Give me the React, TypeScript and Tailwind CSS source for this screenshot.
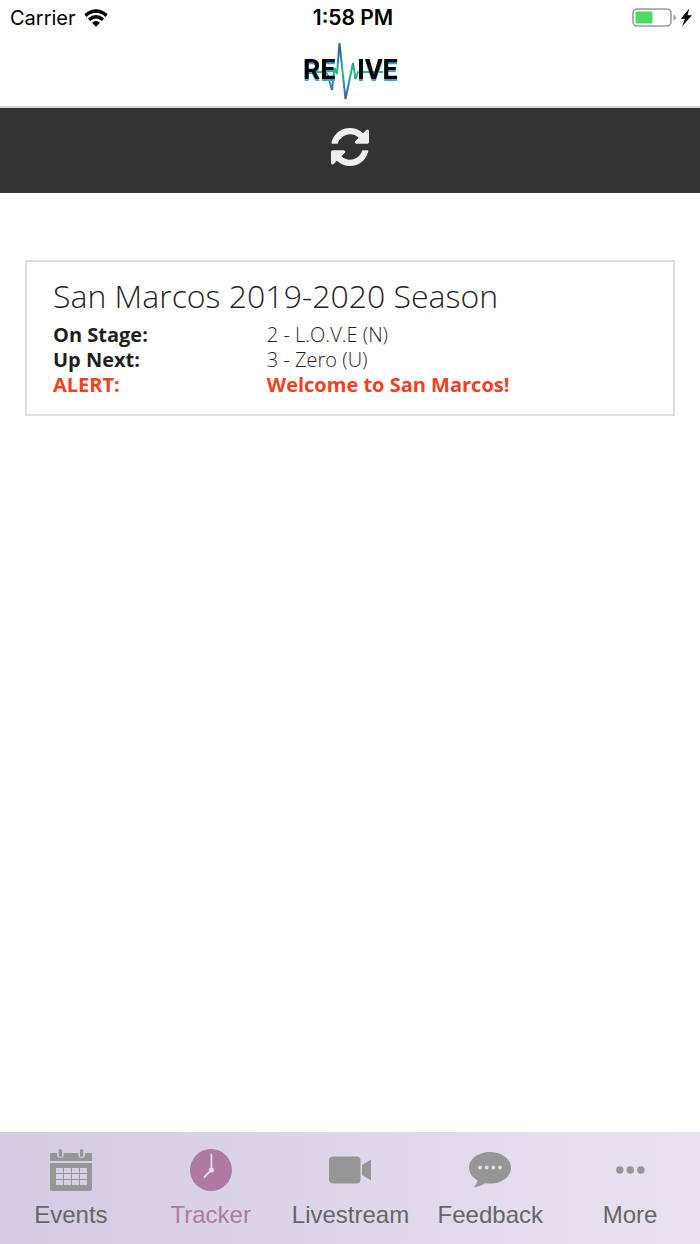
import type { ReactElement, ReactNode } from "react";

interface Tab {
  label: string;
  icon: ReactNode;
  active?: boolean;
}

interface TrackerRow {
  label: string;
  value: string;
  alert?: boolean;
}

const ROWS: TrackerRow[] = [
  { label: "On Stage:", value: "2 - L.O.V.E (N)" },
  { label: "Up Next:", value: "3 - Zero (U)" },
  { label: "ALERT:", value: "Welcome to San Marcos!", alert: true },
];

const TABS: Tab[] = [
  { label: "Events", icon: <CalendarIcon /> },
  { label: "Tracker", icon: <ClockIcon />, active: true },
  { label: "Livestream", icon: <VideoIcon /> },
  { label: "Feedback", icon: <ChatIcon /> },
  { label: "More", icon: <MoreIcon /> },
];

function CalendarIcon(): ReactElement {
  const cols = [6, 14, 22, 30];
  const rows = [19, 25, 31];
  return (
    <svg viewBox="0 0 42 42" className="h-[42px] w-[42px]" aria-hidden="true">
      <path
        fill="currentColor"
        d="M1 4H7V5.5A3.4 3.4 0 0 0 13.8 5.5V4H28.2V5.5A3.4 3.4 0 0 0 35 5.5V4H41Q42 4 42 5V12H0V5Q0 4 1 4Z"
      />
      <rect x="8.7" width="3.4" height="8" rx="1.6" fill="currentColor" />
      <rect x="29.9" width="3.4" height="8" rx="1.6" fill="currentColor" />
      <path fill="currentColor" d="M0 14H42V40Q42 42 40 42H2Q0 42 0 40Z" />
      {rows.map(y => cols.map(x => (
        <rect key={`${x}-${y}`} x={x} y={y} width="7" height="5" fill="#d8d1e6" />
      )))}
    </svg>
  );
}

function ClockIcon(): ReactElement {
  return (
    <svg viewBox="0 0 42 42" className="h-[42px] w-[42px]" aria-hidden="true">
      <circle cx="21" cy="21" r="21" fill="currentColor" />
      <path d="M21.4 5.5V21L14.5 28" fill="none" stroke="#e3dcec" strokeWidth="1.8" strokeLinecap="round" />
      <circle cx="21.4" cy="21" r="2.6" fill="#e3dcec" />
    </svg>
  );
}

function VideoIcon(): ReactElement {
  return (
    <svg viewBox="0 0 42 42" className="h-[42px] w-[42px]" aria-hidden="true">
      <rect y="7.5" width="31.5" height="27" rx="4" fill="currentColor" />
      <path d="M33 16L42 10.5V31.5L33 26Z" fill="currentColor" />
    </svg>
  );
}

function ChatIcon(): ReactElement {
  return (
    <svg viewBox="0 0 42 42" className="h-[42px] w-[42px]" aria-hidden="true">
      <path
        fill="currentColor"
        d="M21 3C32.6 3 42 10 42 18.8S32.6 34.6 21 34.6Q18.5 34.6 16.5 34.2Q11 37.5 4.5 38.5Q8 35.5 8.5 31.5Q0 26.5 0 18.8C0 10 9.4 3 21 3Z"
      />
      {[11, 17.7, 24.3, 31].map(x => (
        <circle key={x} cx={x} cy="18.5" r="1.9" fill="#e3dcec" />
      ))}
    </svg>
  );
}

function MoreIcon(): ReactElement {
  return (
    <svg viewBox="0 0 42 42" className="h-[42px] w-[42px]" aria-hidden="true">
      {[10.8, 21.3, 31.8].map(x => (
        <circle key={x} cx={x} cy="21" r="3.7" fill="currentColor" />
      ))}
    </svg>
  );
}

function RefreshIcon(): ReactElement {
  return (
    <svg viewBox="0 0 1536 1536" className="h-[38px] w-[38px]" fill="currentColor" aria-hidden="true">
      <path d="M1511 928q0 5-1 7-64 268-268 434.5t-478 166.5q-146 0-282.5-55t-243.5-157l-129 129q-19 19-45 19t-45-19-19-45v-448q0-26 19-45t45-19h448q26 0 45 19t19 45-19 45l-137 137q71 66 161 102t187 36q134 0 250-65t186-179q11-17 53-117 8-23 30-23h192q13 0 22.5 9.5t9.5 22.5zm25-800v448q0 26-19 45t-45 19h-448q-26 0-45-19t-19-45 19-45l138-138q-148-137-349-137-134 0-250 65t-186 179q-11 17-53 117-8 23-30 23h-199q-13 0-22.5-9.5t-9.5-22.5v-7q65-268 270-434.5t480-166.5q146 0 284 55.5t245 156.5l130-129q19-19 45-19t45 19 19 45z" />
    </svg>
  );
}

function WifiIcon(): ReactElement {
  return (
    <svg viewBox="0 0 24 18" className="h-[18px] w-6" role="img" aria-label="Wi-Fi">
      <g fill="none" stroke="#000" strokeWidth="3.4">
        <path d="M1.4 6.6Q12 -2.4 22.6 6.6" />
        <path d="M5 10.8Q12 4.8 19 10.8" />
      </g>
      <path d="M8 13.8Q12 10.4 16 13.8L12 17.8Z" fill="#000" />
    </svg>
  );
}

function BatteryIcon(): ReactElement {
  return (
    <svg viewBox="0 0 60 20" className="h-5 w-[60px]" role="img" aria-label="Battery charging">
      <rect x="1" y="1" width="38" height="17" rx="4" fill="#fff" stroke="#9a9a9a" strokeWidth="1.6" />
      <rect x="3.5" y="3.5" width="17" height="12" rx="1" fill="#4cd964" />
      <path d="M41.5 6.5Q44 7.5 44 9.5T41.5 12.5Z" fill="#9a9a9a" />
      <path d="M57.3 0.5L48.8 10.8H53L50.2 18.2L60 7.3H55.5Z" fill="#000" />
    </svg>
  );
}

function Logo(): ReactElement {
  return (
    <svg viewBox="0 0 98 60" className="h-[60px] w-[98px]" role="img" aria-label="Revive">
      <defs>
        <linearGradient id="pulse" x1="0" y1="0" x2="0" y2="60" gradientUnits="userSpaceOnUse">
          <stop offset="0" stopColor="#3b4fa8" />
          <stop offset="0.3" stopColor="#2f7fae" />
          <stop offset="0.5" stopColor="#1fc46c" />
          <stop offset="0.7" stopColor="#2a8fa8" />
          <stop offset="1" stopColor="#3b4fa8" />
        </linearGradient>
      </defs>
      <path
        d="M16 31H25L27 35L31 49L33.5 27L36 33L38.5 2L44.5 58L52 22L54.5 38L57 31H82"
        fill="none"
        stroke="url(#pulse)"
        strokeWidth="2"
        strokeLinejoin="bevel"
      />
      <g
        className="font-['Roboto',sans-serif] text-[27px] font-bold drop-shadow-[0_2px_0_#35a3dc]"
        fill="#000"
      >
        <text x="2" y="38">RE</text>
        <text x="56" y="38">IVE</text>
      </g>
    </svg>
  );
}

function StatusBar(): ReactElement {
  return (
    <div className="grid h-9 grid-cols-3 items-center pr-2 pl-[10px] font-['Inter',sans-serif] text-xl text-black">
      <div className="flex items-center gap-2">
        <span>Carrier</span>
        <WifiIcon />
      </div>
      <span className="pl-1 text-center text-[21px] font-semibold">1:58 PM</span>
      <div className="flex justify-end">
        <BatteryIcon />
      </div>
    </div>
  );
}

export default function App(): ReactElement {
  return (
    <div className="flex min-h-screen flex-col bg-white font-['Open_Sans',sans-serif] text-[#1f1f1f]">
      <header className="border-b-2 border-[#d4d4d4]">
        <StatusBar />
        <div className="flex h-[70px] justify-center pt-[5px]">
          <Logo />
        </div>
      </header>

      {/* Refresh bar */}
      <div className="flex h-[85px] items-start justify-center bg-[#333] pt-5">
        <button type="button" aria-label="Refresh" className="text-[#eee]">
          <RefreshIcon />
        </button>
      </div>

      <main className="flex-1 px-[25px] pt-[67px]">
        <section className="border-2 border-[#ddd] px-[26px] pt-3 pb-[17px]">
          <h1 className="mb-1 text-[32px] leading-[44px] font-light">San Marcos 2019-2020 Season</h1>
          <dl className="text-xl leading-[25px]">
            {ROWS.map(row => (
              <div
                key={row.label}
                className={row.alert ? "grid grid-cols-[36%_1fr] font-bold text-[#f04124]" : "grid grid-cols-[36%_1fr]"}
              >
                <dt className="font-bold">{row.label}</dt>
                <dd className={row.alert ? "" : "font-light"}>{row.value}</dd>
              </div>
            ))}
          </dl>
        </section>
      </main>

      {/* Tab bar */}
      <nav className="grid h-28 grid-cols-5 bg-linear-to-r from-[#d3cbe3] to-[#e9e3f0] pl-px font-['Liberation_Sans',Arial,sans-serif] text-2xl">
        {TABS.map(tab => (
          <button
            key={tab.label}
            type="button"
            aria-current={tab.active ? "page" : undefined}
            className={`flex flex-col items-center gap-2 pt-[17px] ${tab.active ? "text-[#ae7aa4]" : "text-[#969696]"}`}
          >
            {tab.icon}
            <span className={tab.active ? "" : "text-[#666]"}>{tab.label}</span>
          </button>
        ))}
      </nav>
    </div>
  );
}
